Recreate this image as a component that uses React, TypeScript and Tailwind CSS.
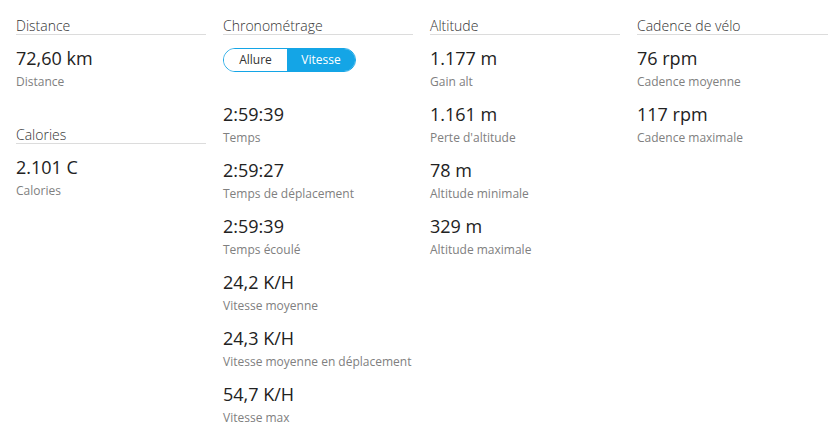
import React, { useState } from 'react';

type Stat = { value: string; label: string };

const distance: Stat[] = [{ value: '72,60 km', label: 'Distance' }];
const calories: Stat[] = [{ value: '2.101 C', label: 'Calories' }];

const timing: Stat[] = [
  { value: '2:59:39', label: 'Temps' },
  { value: '2:59:27', label: 'Temps de déplacement' },
  { value: '2:59:39', label: 'Temps écoulé' },
  { value: '24,2 K/H', label: 'Vitesse moyenne' },
  { value: '24,3 K/H', label: 'Vitesse moyenne en déplacement' },
  { value: '54,7 K/H', label: 'Vitesse max' },
];

const altitude: Stat[] = [
  { value: '1.177 m', label: 'Gain alt' },
  { value: '1.161 m', label: "Perte d'altitude" },
  { value: '78 m', label: 'Altitude minimale' },
  { value: '329 m', label: 'Altitude maximale' },
];

const cadence: Stat[] = [
  { value: '76 rpm', label: 'Cadence moyenne' },
  { value: '117 rpm', label: 'Cadence maximale' },
];

function Header({ title }: { title: string }) {
  return (
    <h3 className="h-[20px] border-b border-[#dcdcdc] pt-[1px] text-[14px] leading-[19px] font-light text-[#333]">
      {title}
    </h3>
  );
}

function StatItem({ stat }: { stat: Stat }) {
  return (
    <div>
      <div className="text-[18px] leading-[25px] text-[#222]">{stat.value}</div>
      <div className="mt-[3px] text-[12px] leading-[16px] text-[#808080]">{stat.label}</div>
    </div>
  );
}

function Section({ title, stats, children }: { title: string; stats: Stat[]; children?: React.ReactNode }) {
  return (
    <section>
      <Header title={title} />
      <div className="pt-[11px] flex flex-col gap-[12px]">
        {children}
        {stats.map((s, i) => (
          <StatItem key={i} stat={s} />
        ))}
      </div>
    </section>
  );
}

function SpeedToggle() {
  const [mode, setMode] = useState<'allure' | 'vitesse'>('vitesse');
  return (
    <div className="h-[44px]">
      <div className="inline-flex h-[24px] rounded-full border border-[#14a5e6] overflow-hidden text-[12px]">
        <button
          onClick={() => setMode('allure')}
          className={`w-[63px] ${mode === 'allure' ? 'bg-[#14a5e6] text-white' : 'bg-white text-[#333]'}`}
        >
          Allure
        </button>
        <button
          onClick={() => setMode('vitesse')}
          className={`w-[68px] ${mode === 'vitesse' ? 'bg-[#14a5e6] text-white' : 'bg-white text-[#333]'}`}
        >
          Vitesse
        </button>
      </div>
    </div>
  );
}

export default function App() {
  return (
    <div
      className="w-[835px] h-[448px] bg-white px-[16px] pt-[15px]"
      style={{ fontFamily: '"Open Sans", "Liberation Sans", sans-serif' }}
    >
      <div className="grid grid-cols-[190px_190px_190px_191px] gap-x-[17px]">
        {/* Distance + Calories */}
        <div className="flex flex-col gap-[34px]">
          <Section title="Distance" stats={distance} />
          <Section title="Calories" stats={calories} />
        </div>

        {/* Chronométrage */}
        <Section title="Chronométrage" stats={timing}>
          <SpeedToggle />
        </Section>

        {/* Altitude */}
        <Section title="Altitude" stats={altitude} />

        {/* Cadence */}
        <Section title="Cadence de vélo" stats={cadence} />
      </div>
    </div>
  );
}
